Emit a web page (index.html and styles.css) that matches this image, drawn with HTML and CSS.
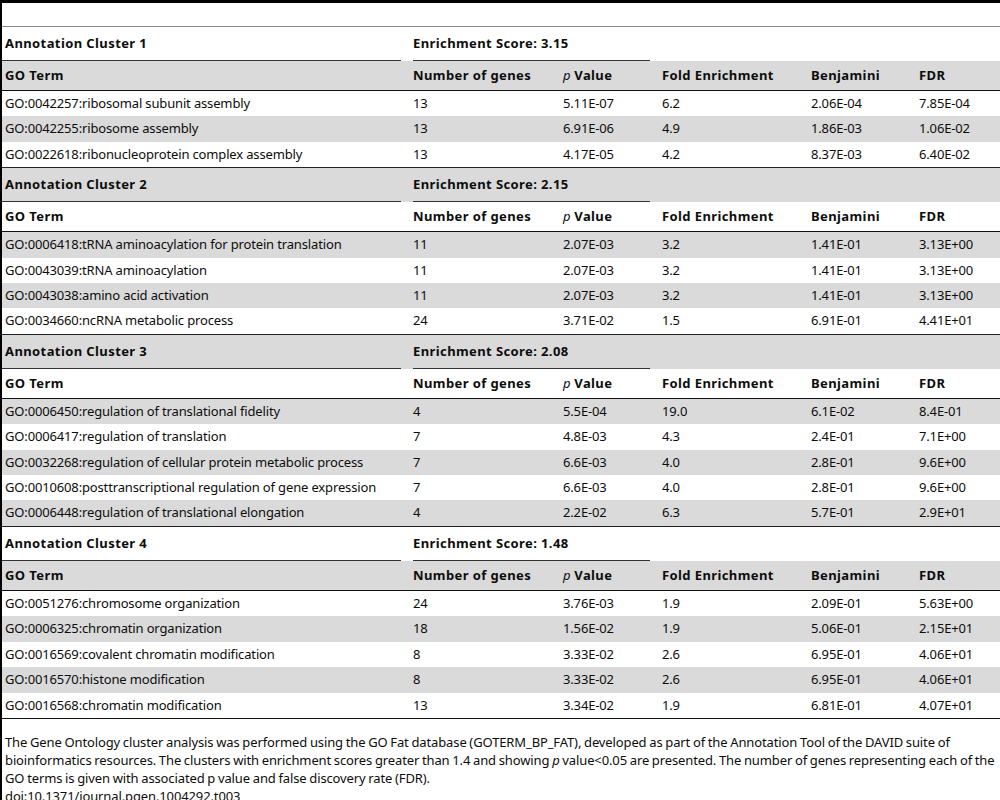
FILE: index.html
```html
<!DOCTYPE html>
<html>
<head>
	<title>Table 3</title>
	<link rel="stylesheet" href="styles.css">
</head>
<body>
	<div class="page">
		<table class="go-table">
			<colgroup>
				<col class="c-term">
				<col class="c-genes">
				<col class="c-p">
				<col class="c-fold">
				<col class="c-benj">
				<col class="c-fdr">
			</colgroup>
			<thead>
				<tr class="blank"><th colspan="6"></th></tr>
			</thead>
			<tbody>
				<tr class="cluster">
					<td><div class="cl-name">Annotation Cluster 1</div></td>
					<td colspan="2"><div class="cl-score">Enrichment Score: 3.15</div></td>
					<td></td><td></td><td></td>
				</tr>
				<tr class="head">
					<td>GO Term</td><td>Number of genes</td><td><i>p</i> Value</td><td>Fold Enrichment</td><td>Benjamini</td><td>FDR</td>
				</tr>
				<tr><td>GO:0042257:ribosomal subunit assembly</td><td>13</td><td>5.11E-07</td><td>6.2</td><td>2.06E-04</td><td>7.85E-04</td></tr>
				<tr><td>GO:0042255:ribosome assembly</td><td>13</td><td>6.91E-06</td><td>4.9</td><td>1.86E-03</td><td>1.06E-02</td></tr>
				<tr><td>GO:0022618:ribonucleoprotein complex assembly</td><td>13</td><td>4.17E-05</td><td>4.2</td><td>8.37E-03</td><td>6.40E-02</td></tr>

				<tr class="cluster sep">
					<td><div class="cl-name">Annotation Cluster 2</div></td>
					<td colspan="2"><div class="cl-score">Enrichment Score: 2.15</div></td>
					<td></td><td></td><td></td>
				</tr>
				<tr class="head">
					<td>GO Term</td><td>Number of genes</td><td><i>p</i> Value</td><td>Fold Enrichment</td><td>Benjamini</td><td>FDR</td>
				</tr>
				<tr><td>GO:0006418:tRNA aminoacylation for protein translation</td><td>11</td><td>2.07E-03</td><td>3.2</td><td>1.41E-01</td><td>3.13E+00</td></tr>
				<tr><td>GO:0043039:tRNA aminoacylation</td><td>11</td><td>2.07E-03</td><td>3.2</td><td>1.41E-01</td><td>3.13E+00</td></tr>
				<tr><td>GO:0043038:amino acid activation</td><td>11</td><td>2.07E-03</td><td>3.2</td><td>1.41E-01</td><td>3.13E+00</td></tr>
				<tr><td>GO:0034660:ncRNA metabolic process</td><td>24</td><td>3.71E-02</td><td>1.5</td><td>6.91E-01</td><td>4.41E+01</td></tr>

				<tr class="cluster sep">
					<td><div class="cl-name">Annotation Cluster 3</div></td>
					<td colspan="2"><div class="cl-score">Enrichment Score: 2.08</div></td>
					<td></td><td></td><td></td>
				</tr>
				<tr class="head">
					<td>GO Term</td><td>Number of genes</td><td><i>p</i> Value</td><td>Fold Enrichment</td><td>Benjamini</td><td>FDR</td>
				</tr>
				<tr><td>GO:0006450:regulation of translational fidelity</td><td>4</td><td>5.5E-04</td><td>19.0</td><td>6.1E-02</td><td>8.4E-01</td></tr>
				<tr><td>GO:0006417:regulation of translation</td><td>7</td><td>4.8E-03</td><td>4.3</td><td>2.4E-01</td><td>7.1E+00</td></tr>
				<tr><td>GO:0032268:regulation of cellular protein metabolic process</td><td>7</td><td>6.6E-03</td><td>4.0</td><td>2.8E-01</td><td>9.6E+00</td></tr>
				<tr><td>GO:0010608:posttranscriptional regulation of gene expression</td><td>7</td><td>6.6E-03</td><td>4.0</td><td>2.8E-01</td><td>9.6E+00</td></tr>
				<tr><td>GO:0006448:regulation of translational elongation</td><td>4</td><td>2.2E-02</td><td>6.3</td><td>5.7E-01</td><td>2.9E+01</td></tr>

				<tr class="cluster sep">
					<td><div class="cl-name">Annotation Cluster 4</div></td>
					<td colspan="2"><div class="cl-score">Enrichment Score: 1.48</div></td>
					<td></td><td></td><td></td>
				</tr>
				<tr class="head">
					<td>GO Term</td><td>Number of genes</td><td><i>p</i> Value</td><td>Fold Enrichment</td><td>Benjamini</td><td>FDR</td>
				</tr>
				<tr><td>GO:0051276:chromosome organization</td><td>24</td><td>3.76E-03</td><td>1.9</td><td>2.09E-01</td><td>5.63E+00</td></tr>
				<tr><td>GO:0006325:chromatin organization</td><td>18</td><td>1.56E-02</td><td>1.9</td><td>5.06E-01</td><td>2.15E+01</td></tr>
				<tr><td>GO:0016569:covalent chromatin modification</td><td>8</td><td>3.33E-02</td><td>2.6</td><td>6.95E-01</td><td>4.06E+01</td></tr>
				<tr><td>GO:0016570:histone modification</td><td>8</td><td>3.33E-02</td><td>2.6</td><td>6.95E-01</td><td>4.06E+01</td></tr>
				<tr><td>GO:0016568:chromatin modification</td><td>13</td><td>3.34E-02</td><td>1.9</td><td>6.81E-01</td><td>4.07E+01</td></tr>
			</tbody>
		</table>
		<div class="notes">
			<p>The Gene Ontology cluster analysis was performed using the GO Fat database (GOTERM_BP_FAT), developed as part of the Annotation Tool of the DAVID suite of bioinformatics resources. The clusters with enrichment scores greater than 1.4 and showing <i>p</i> value&lt;0.05 are presented. The number of genes representing each of the GO terms is given with associated p value and false discovery rate (FDR).</p>
			<p>doi:10.1371/journal.pgen.1004292.t003</p>
		</div>
	</div>
</body>
</html>
```

FILE: styles.css
```css
body {
	margin: 0;
	background-color: #ffffff;
	font-family: "Noto Sans", "Open Sans", sans-serif;
	font-size: 13px;
	color: #0d0d0d;
	overflow-x: hidden;
}
.page {
	border-left: 2px solid #000000;
	border-top: 3px solid #000000;
	min-height: 820px;
}
.go-table {
	width: 998px;
	border-collapse: collapse;
	table-layout: fixed;
}
.c-term { width: 406px; }
.c-genes { width: 150px; }
.c-p { width: 99px; }
.c-fold { width: 149px; }
.c-benj { width: 108px; }
.c-fdr { width: 86px; }
.go-table td {
	padding: 3px 0 4px 5px;
	line-height: 18.4px;
	white-space: nowrap;
	text-align: left;
	letter-spacing: -0.15px;
}
.go-table td:first-child {
	padding-left: 3px;
}
.blank th {
	height: 23px;
	padding: 0;
	border-bottom: 1px solid #8a8a8a;
}
.go-table tbody tr:nth-child(even) {
	background-color: #dadada;
}
.go-table .cluster td {
	padding: 0;
	font-weight: bold;
	letter-spacing: 0.4px;
	line-height: 18px;
}
.cluster.sep td {
	border-top: 1px solid #222222;
}
.cl-name,
.cl-score {
	padding: 7px 0 8px 0;
	border-bottom: 1px solid #333333;
	margin-right: 7px;
}
.cl-name {
	padding-left: 3px;
}
.cl-score {
	margin-left: 5px;
}
.go-table .head td {
	font-weight: bold;
	letter-spacing: 0.4px;
	line-height: 18px;
	padding-top: 5px;
	padding-bottom: 6px;
	border-bottom: 1px solid #111111;
}
.head i {
	font-weight: normal;
	letter-spacing: 0;
}
.notes {
	padding: 14px 0 0 3px;
	border-top: 1px solid #111111;
	line-height: 18px;
	letter-spacing: -0.12px;
	word-spacing: -0.5px;
}
.notes p {
	margin: 0;
}
```
